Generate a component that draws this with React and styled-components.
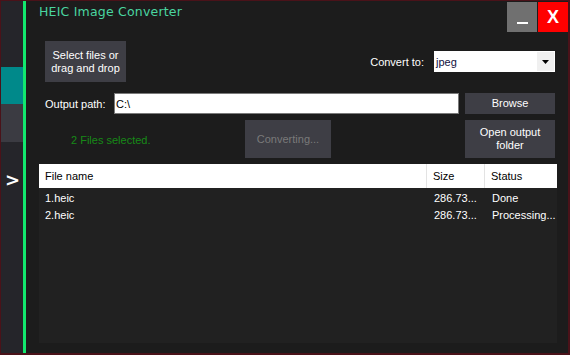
import { Fragment } from "react";
import styled, { createGlobalStyle } from "styled-components";

const GlobalStyle = createGlobalStyle`
  html, body {
    margin: 0;
    padding: 0;
    background: #1c1c1c;
  }
  * {
    box-sizing: border-box;
  }
`;

const Frame = styled.div`
  width: 570px;
  height: 355px;
  display: flex;
  border-style: solid;
  border-color: #4a1219;
  border-width: 1px 2px 2px 1px;
  background: #1c1c1c;
  font-family: "Liberation Sans", Arial, sans-serif;
  font-size: 11px;
  color: #ffffff;
  overflow: hidden;
`;

const Sidebar = styled.div`
  width: 22px;
  background: #25252a;
  display: flex;
  flex-direction: column;
  padding-top: 66px;
`;

const SideTab = styled.div`
  height: ${(p) => p.h}px;
  background: ${(p) => p.bg};
`;

const Arrow = styled.div`
  margin-top: 29px;
  text-align: center;
  font-family: "DejaVu Sans", sans-serif;
  font-weight: bold;
  font-size: 18px;
  line-height: 17px;
  color: #ffffff;
  padding-left: 1px;
`;

const GreenBar = styled.div`
  width: 3px;
  background: #12e86e;
`;

const Main = styled.div`
  flex: 1;
  display: flex;
  flex-direction: column;
  padding: 0 11px 10px 13px;
`;

const TitleBar = styled.div`
  height: 32px;
  display: flex;
  align-items: flex-start;
`;

const Title = styled.div`
  flex: 1;
  font-family: "DejaVu Sans", sans-serif;
  font-size: 12.5px;
  color: #4ad6a0;
  padding-top: 3px;
  letter-spacing: 0.2px;
`;

const WinButton = styled.div`
  width: 30px;
  height: 30px;
  margin-top: 1px;
  margin-left: ${(p) => p.ml || 0}px;
  margin-right: ${(p) => p.mr || 0}px;
  background: ${(p) => p.bg};
  color: #ffffff;
  display: flex;
  align-items: center;
  justify-content: center;
  font-family: "Liberation Sans", Arial, sans-serif;
  font-weight: bold;
  font-size: 18px;
`;

const MinLine = styled.div`
  width: 11px;
  height: 2px;
  background: #ffffff;
  margin-top: 12px;
`;

const Row = styled.div`
  display: flex;
  align-items: center;
  height: ${(p) => p.h}px;
  margin-top: ${(p) => p.mt}px;
  padding-left: ${(p) => p.pl || 0}px;
`;

const Button = styled.div`
  width: ${(p) => p.w}px;
  height: ${(p) => p.h}px;
  margin-left: ${(p) => p.ml || 0}px;
  margin-right: ${(p) => p.mr || 0}px;
  background: #3e3e45;
  color: ${(p) => (p.disabled ? "#7a7a7a" : "#ffffff")};
  display: flex;
  align-items: center;
  justify-content: center;
  text-align: center;
  line-height: 13px;
  font-size: 11px;
`;

const Spacer = styled.div`
  flex: 1;
`;

const Label = styled.div`
  width: ${(p) => p.w || "auto"};
  margin-right: ${(p) => p.mr || 0}px;
  color: #ffffff;
`;

const SelectBox = styled.div`
  width: 121px;
  height: 21px;
  margin-right: 2px;
  background: #ffffff;
  display: flex;
  align-items: center;
  padding: 0 1px 0 2px;
  color: #101040;
`;

const SelectText = styled.div`
  flex: 1;
`;

const DropBtn = styled.div`
  width: 17px;
  height: 19px;
  background: #f0f0f0;
  display: flex;
  align-items: center;
  justify-content: center;
`;

const TextInput = styled.div`
  flex: 1;
  height: 21px;
  background: #ffffff;
  border: 1px solid #7a7a7a;
  color: #000000;
  padding-left: 1px;
  display: flex;
  align-items: center;
`;

const Status = styled.div`
  width: 174px;
  margin-left: 32px;
  color: #178a17;
  padding-top: 2px;
`;

const Table = styled.div`
  margin-top: 6px;
  flex: 1;
  background: #212121;
  display: flex;
  flex-direction: column;
`;

const Grid = styled.div`
  display: grid;
  grid-template-columns: 387px 58px 1fr;
  padding-top: ${(p) => p.pt || 0}px;
`;

const HeadCell = styled.div`
  height: 24px;
  background: #ffffff;
  color: #000000;
  display: flex;
  align-items: center;
  padding-left: 6px;
  border-left: ${(p) => (p.first ? "none" : "1px solid #e3e3e3")};
`;

const Cell = styled.div`
  height: 17px;
  display: flex;
  align-items: center;
  padding-left: ${(p) => (p.first ? 6 : 8)}px;
  color: #ffffff;
  white-space: nowrap;
  overflow: hidden;
`;

const files = [
  { name: "1.heic", size: "286.73...", status: "Done" },
  { name: "2.heic", size: "286.73...", status: "Processing..." },
];

export default function App() {
  return (
    <>
      <GlobalStyle />
      <Frame>
        <Sidebar>
          <SideTab h={37} bg="#00898a" />
          <SideTab h={38} bg="#3b3b42" />
          <Arrow>&gt;</Arrow>
        </Sidebar>
        <GreenBar />
        <Main>
          <TitleBar>
            <Title>HEIC Image Converter</Title>
            <WinButton bg="#707070">
              <MinLine />
            </WinButton>
            <WinButton bg="#ff0000" ml={1} mr={-11}>
              X
            </WinButton>
          </TitleBar>

          <Row h={41} mt={8} pl={6}>
            <Button w={81} h={41}>
              Select files or
              <br />
              drag and drop
            </Button>
            <Spacer />
            <Label mr={10}>Convert to:</Label>
            <SelectBox>
              <SelectText>jpeg</SelectText>
              <DropBtn>
                <svg width="7" height="4" viewBox="0 0 7 4">
                  <path d="M0 0h7L3.5 4z" fill="#000" />
                </svg>
              </DropBtn>
            </SelectBox>
          </Row>

          <Row h={21} mt={11} pl={6}>
            <Label w="69px">Output path:</Label>
            <TextInput>C:\</TextInput>
            <Button w={90} h={21} ml={6} mr={2}>
              Browse
            </Button>
          </Row>

          <Row h={38} mt={6}>
            <Status>2 Files selected.</Status>
            <Button w={86} h={38} disabled>
              Converting...
            </Button>
            <Spacer />
            <Button w={90} h={38} mr={2}>
              Open output
              <br />
              folder
            </Button>
          </Row>

          <Table>
            <Grid>
              <HeadCell first>File name</HeadCell>
              <HeadCell>Size</HeadCell>
              <HeadCell>Status</HeadCell>
            </Grid>
            <Grid pt={1}>
              {files.map((f) => (
                <Fragment key={f.name}>
                  <Cell first>{f.name}</Cell>
                  <Cell>{f.size}</Cell>
                  <Cell>{f.status}</Cell>
                </Fragment>
              ))}
            </Grid>
          </Table>
        </Main>
      </Frame>
    </>
  );
}
